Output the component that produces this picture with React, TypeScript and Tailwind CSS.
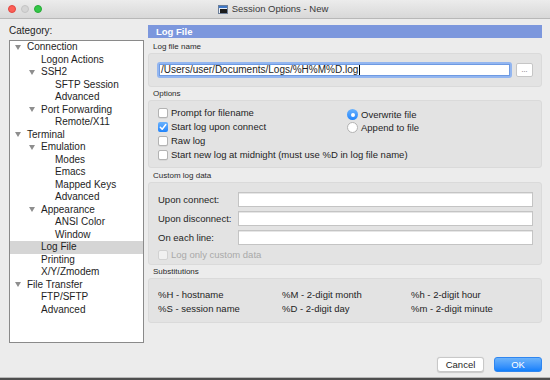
import React from "react";

type Node = { label: string; level: 0 | 1 | 2; tri?: boolean; sel?: boolean };

const tree: Node[] = [
  { label: "Connection", level: 0, tri: true },
  { label: "Logon Actions", level: 1 },
  { label: "SSH2", level: 1, tri: true },
  { label: "SFTP Session", level: 2 },
  { label: "Advanced", level: 2 },
  { label: "Port Forwarding", level: 1, tri: true },
  { label: "Remote/X11", level: 2 },
  { label: "Terminal", level: 0, tri: true },
  { label: "Emulation", level: 1, tri: true },
  { label: "Modes", level: 2 },
  { label: "Emacs", level: 2 },
  { label: "Mapped Keys", level: 2 },
  { label: "Advanced", level: 2 },
  { label: "Appearance", level: 1, tri: true },
  { label: "ANSI Color", level: 2 },
  { label: "Window", level: 2 },
  { label: "Log File", level: 1, sel: true },
  { label: "Printing", level: 1 },
  { label: "X/Y/Zmodem", level: 1 },
  { label: "File Transfer", level: 0, tri: true },
  { label: "FTP/SFTP", level: 1 },
  { label: "Advanced", level: 1 },
];

const indent = ["w-0", "w-[14px]", "w-[28px]"];

function Tri() {
  return (
    <svg width="6" height="5" viewBox="0 0 6 5">
      <path d="M0 0 L6 0 L3 5 Z" fill="#8e8e8e" />
    </svg>
  );
}

function Checkbox({ checked, disabled }: { checked?: boolean; disabled?: boolean }) {
  if (checked) {
    return (
      <div className="w-[10px] h-[10px] rounded-[2px] bg-gradient-to-b from-[#69b2fd] to-[#1e84fb] flex items-center justify-center shrink-0">
        <svg width="8" height="8" viewBox="0 0 8 8">
          <path d="M1.3 4.2 L3.2 6.2 L6.8 1.5" stroke="white" strokeWidth="1.5" fill="none" strokeLinecap="round" strokeLinejoin="round" />
        </svg>
      </div>
    );
  }
  return (
    <div
      className={
        disabled
          ? "w-[10px] h-[10px] rounded-[2px] bg-[#f1f1f1] border border-[#d2d2d2] shrink-0"
          : "w-[10px] h-[10px] rounded-[2px] bg-white border border-[#b3b3b3] shadow-[0_0.5px_0.5px_rgba(0,0,0,0.1)] shrink-0"
      }
    />
  );
}

function Radio({ on }: { on?: boolean }) {
  if (on) {
    return (
      <div className="w-[11px] h-[11px] rounded-full bg-gradient-to-b from-[#69b2fd] to-[#1e84fb] flex items-center justify-center shrink-0">
        <div className="w-[4px] h-[4px] rounded-full bg-white" />
      </div>
    );
  }
  return <div className="w-[11px] h-[11px] rounded-full bg-white border border-[#b3b3b3] shrink-0" />;
}

function GroupLabel({ children, h }: { children: React.ReactNode; h: string }) {
  return (
    <div className={`${h} flex items-end pb-[1px] pl-[5px] text-[8px] leading-[10px] text-[#2a2a2a]`}>{children}</div>
  );
}

export default function App() {
  return (
    <div
      className="w-[550px] h-[380px] flex flex-col bg-[#ececec] overflow-hidden text-[#1e1e1e]"
      style={{ fontFamily: '"Liberation Sans", Arial, sans-serif' }}
    >
      {/* Title bar */}
      <div className="h-[19px] shrink-0 grid grid-cols-[1fr_auto_1fr] items-center bg-gradient-to-b from-[#ececec] to-[#d8d8d8] border-b border-[#b8b8b8]">
        <div className="flex items-center gap-[5px] pl-[8px]">
          <div className="w-[8px] h-[8px] rounded-full bg-[#fc5f57] border border-[#e2463f]" />
          <div className="w-[8px] h-[8px] rounded-full bg-[#d5d5d5] border border-[#c4c4c4]" />
          <div className="w-[8px] h-[8px] rounded-full bg-[#33c748] border border-[#27aa36]" />
        </div>
        <div className="flex items-center gap-[4px] pr-[4px]">
          <svg width="10" height="9" viewBox="0 0 10 9">
            <rect x="0" y="0" width="10" height="9" fill="#e9eef6" />
            <rect x="0" y="0" width="10" height="3" fill="#3f78c8" />
            <rect x="2" y="4" width="8" height="5" fill="#1b1b1b" />
            <rect x="0.5" y="0.5" width="9" height="8" fill="none" stroke="#6d7f99" strokeWidth="1" />
          </svg>
          <span className="text-[9.5px] leading-[12px] text-[#3a3a3a]">Session Options - New</span>
        </div>
        <div />
      </div>

      {/* Body */}
      <div className="flex-1 flex pt-[6px] pl-[9px] pr-[8px] gap-[4px] min-h-0">
        {/* Left column */}
        <div className="w-[135px] shrink-0 flex flex-col">
          <div className="h-[15px] text-[10px] leading-[12px]">Category:</div>
          <div className="h-[303px] bg-white border border-[#8a8a8a] flex flex-col">
            {tree.map((n, i) => (
              <div
                key={i}
                className={`h-[12.5px] shrink-0 flex items-center pl-[5px] text-[10px] leading-[12px] ${n.sel ? "bg-[#d5d5d5]" : ""}`}
              >
                <div className={`${indent[n.level]} shrink-0`} />
                <div className="w-[12px] shrink-0 flex items-center">{n.tri ? <Tri /> : null}</div>
                <span className="whitespace-nowrap">{n.label}</span>
              </div>
            ))}
          </div>
        </div>

        {/* Right column */}
        <div className="flex-1 flex flex-col min-w-0">
          <div className="h-[13px] shrink-0 bg-[#7c97dd] pl-[8px] text-white font-bold text-[9.5px] leading-[13px]">Log File</div>

          <GroupLabel h="h-[15px]">Log file name</GroupLabel>
          <div className="h-[34px] shrink-0 bg-[#e3e3e3] border border-[#dadada] rounded-[3px] flex items-center pl-[8px] pr-[8px] gap-[4px]">
            <div className="flex-1 h-[16px] rounded-[3px] border-2 border-[#93b6f0]">
              <div className="h-full bg-white border border-[#6e9ae2] flex items-center pl-[1px] text-[10px] leading-[10px] whitespace-nowrap">
                /Users/user/Documents/Logs/%H%M%D.log
                <span className="inline-block w-[1px] h-[10px] bg-black ml-[1px]" />
              </div>
            </div>
            <div className="w-[17px] h-[14px] bg-white border border-[#c6c6c6] rounded-[2px] flex items-center justify-center text-[7px] leading-[7px] text-[#555] pb-[2px]">
              ...
            </div>
          </div>

          <GroupLabel h="h-[13px]">Options</GroupLabel>
          <div className="h-[68px] shrink-0 bg-[#e3e3e3] border border-[#dadada] rounded-[3px] pt-[5px] pl-[9px] flex flex-col text-[9.5px] leading-[12px]">
            <div className="h-[14px] flex items-center">
              <div className="w-[189px] flex items-center gap-[3px]">
                <Checkbox />
                <span>Prompt for filename</span>
              </div>
              <div className="flex items-center gap-[3px] pt-[3px]">
                <Radio on />
                <span>Overwrite file</span>
              </div>
            </div>
            <div className="h-[14px] flex items-center">
              <div className="w-[189px] flex items-center gap-[3px]">
                <Checkbox checked />
                <span>Start log upon connect</span>
              </div>
              <div className="flex items-center gap-[3px] pt-[1px]">
                <Radio />
                <span>Append to file</span>
              </div>
            </div>
            <div className="h-[14px] flex items-center gap-[3px]">
              <Checkbox />
              <span>Raw log</span>
            </div>
            <div className="h-[14px] flex items-center gap-[3px]">
              <Checkbox />
              <span className="whitespace-nowrap">Start new log at midnight (must use %D in log file name)</span>
            </div>
          </div>

          <GroupLabel h="h-[14px]">Custom log data</GroupLabel>
          <div className="h-[83px] shrink-0 bg-[#e3e3e3] border border-[#dadada] rounded-[3px] pt-[9px] pl-[9px] pr-[8px] flex flex-col gap-[4px] text-[9.5px] leading-[12px]">
            {["Upon connect:", "Upon disconnect:", "On each line:"].map((l) => (
              <div key={l} className="h-[15px] flex items-center">
                <span className="w-[80px] shrink-0 whitespace-nowrap">{l}</span>
                <div className="flex-1 h-[15px] bg-white border border-[#c4c4c4] shadow-[inset_0_1px_0_#e6e6e6]" />
              </div>
            ))}
            <div className="h-[14px] -mt-[1px] flex items-center gap-[3px] text-[#a9a9a9]">
              <Checkbox disabled />
              <span>Log only custom data</span>
            </div>
          </div>

          <GroupLabel h="h-[13px]">Substitutions</GroupLabel>
          <div className="h-[45px] shrink-0 bg-[#e3e3e3] border border-[#dadada] rounded-[3px] pt-[9px] pl-[9px] text-[9.5px] leading-[14px] grid grid-cols-[124px_129px_1fr] auto-rows-[14px]">
            <span>%H - hostname</span>
            <span>%M - 2-digit month</span>
            <span>%h - 2-digit hour</span>
            <span>%S - session name</span>
            <span>%D - 2-digit day</span>
            <span>%m - 2-digit minute</span>
          </div>

          <div className="flex-1" />
          <div className="flex justify-end gap-[10px] pb-[5px]">
            <div className="w-[47px] h-[15px] bg-white border border-[#c8c8c8] rounded-[3px] shadow-[0_0.5px_1px_rgba(0,0,0,0.15)] flex items-center justify-center text-[9.5px] leading-[12px]">
              Cancel
            </div>
            <div className="w-[48px] h-[15px] bg-gradient-to-b from-[#6cb3fa] to-[#0f7ffb] border border-[#2f86f0] rounded-[3px] flex items-center justify-center text-[9.5px] leading-[12px] text-white">
              OK
            </div>
          </div>
        </div>
      </div>
      <div className="h-[3px] shrink-0 border-t border-[#b8b8b8] bg-[#4e4e4e]" />
    </div>
  );
}
